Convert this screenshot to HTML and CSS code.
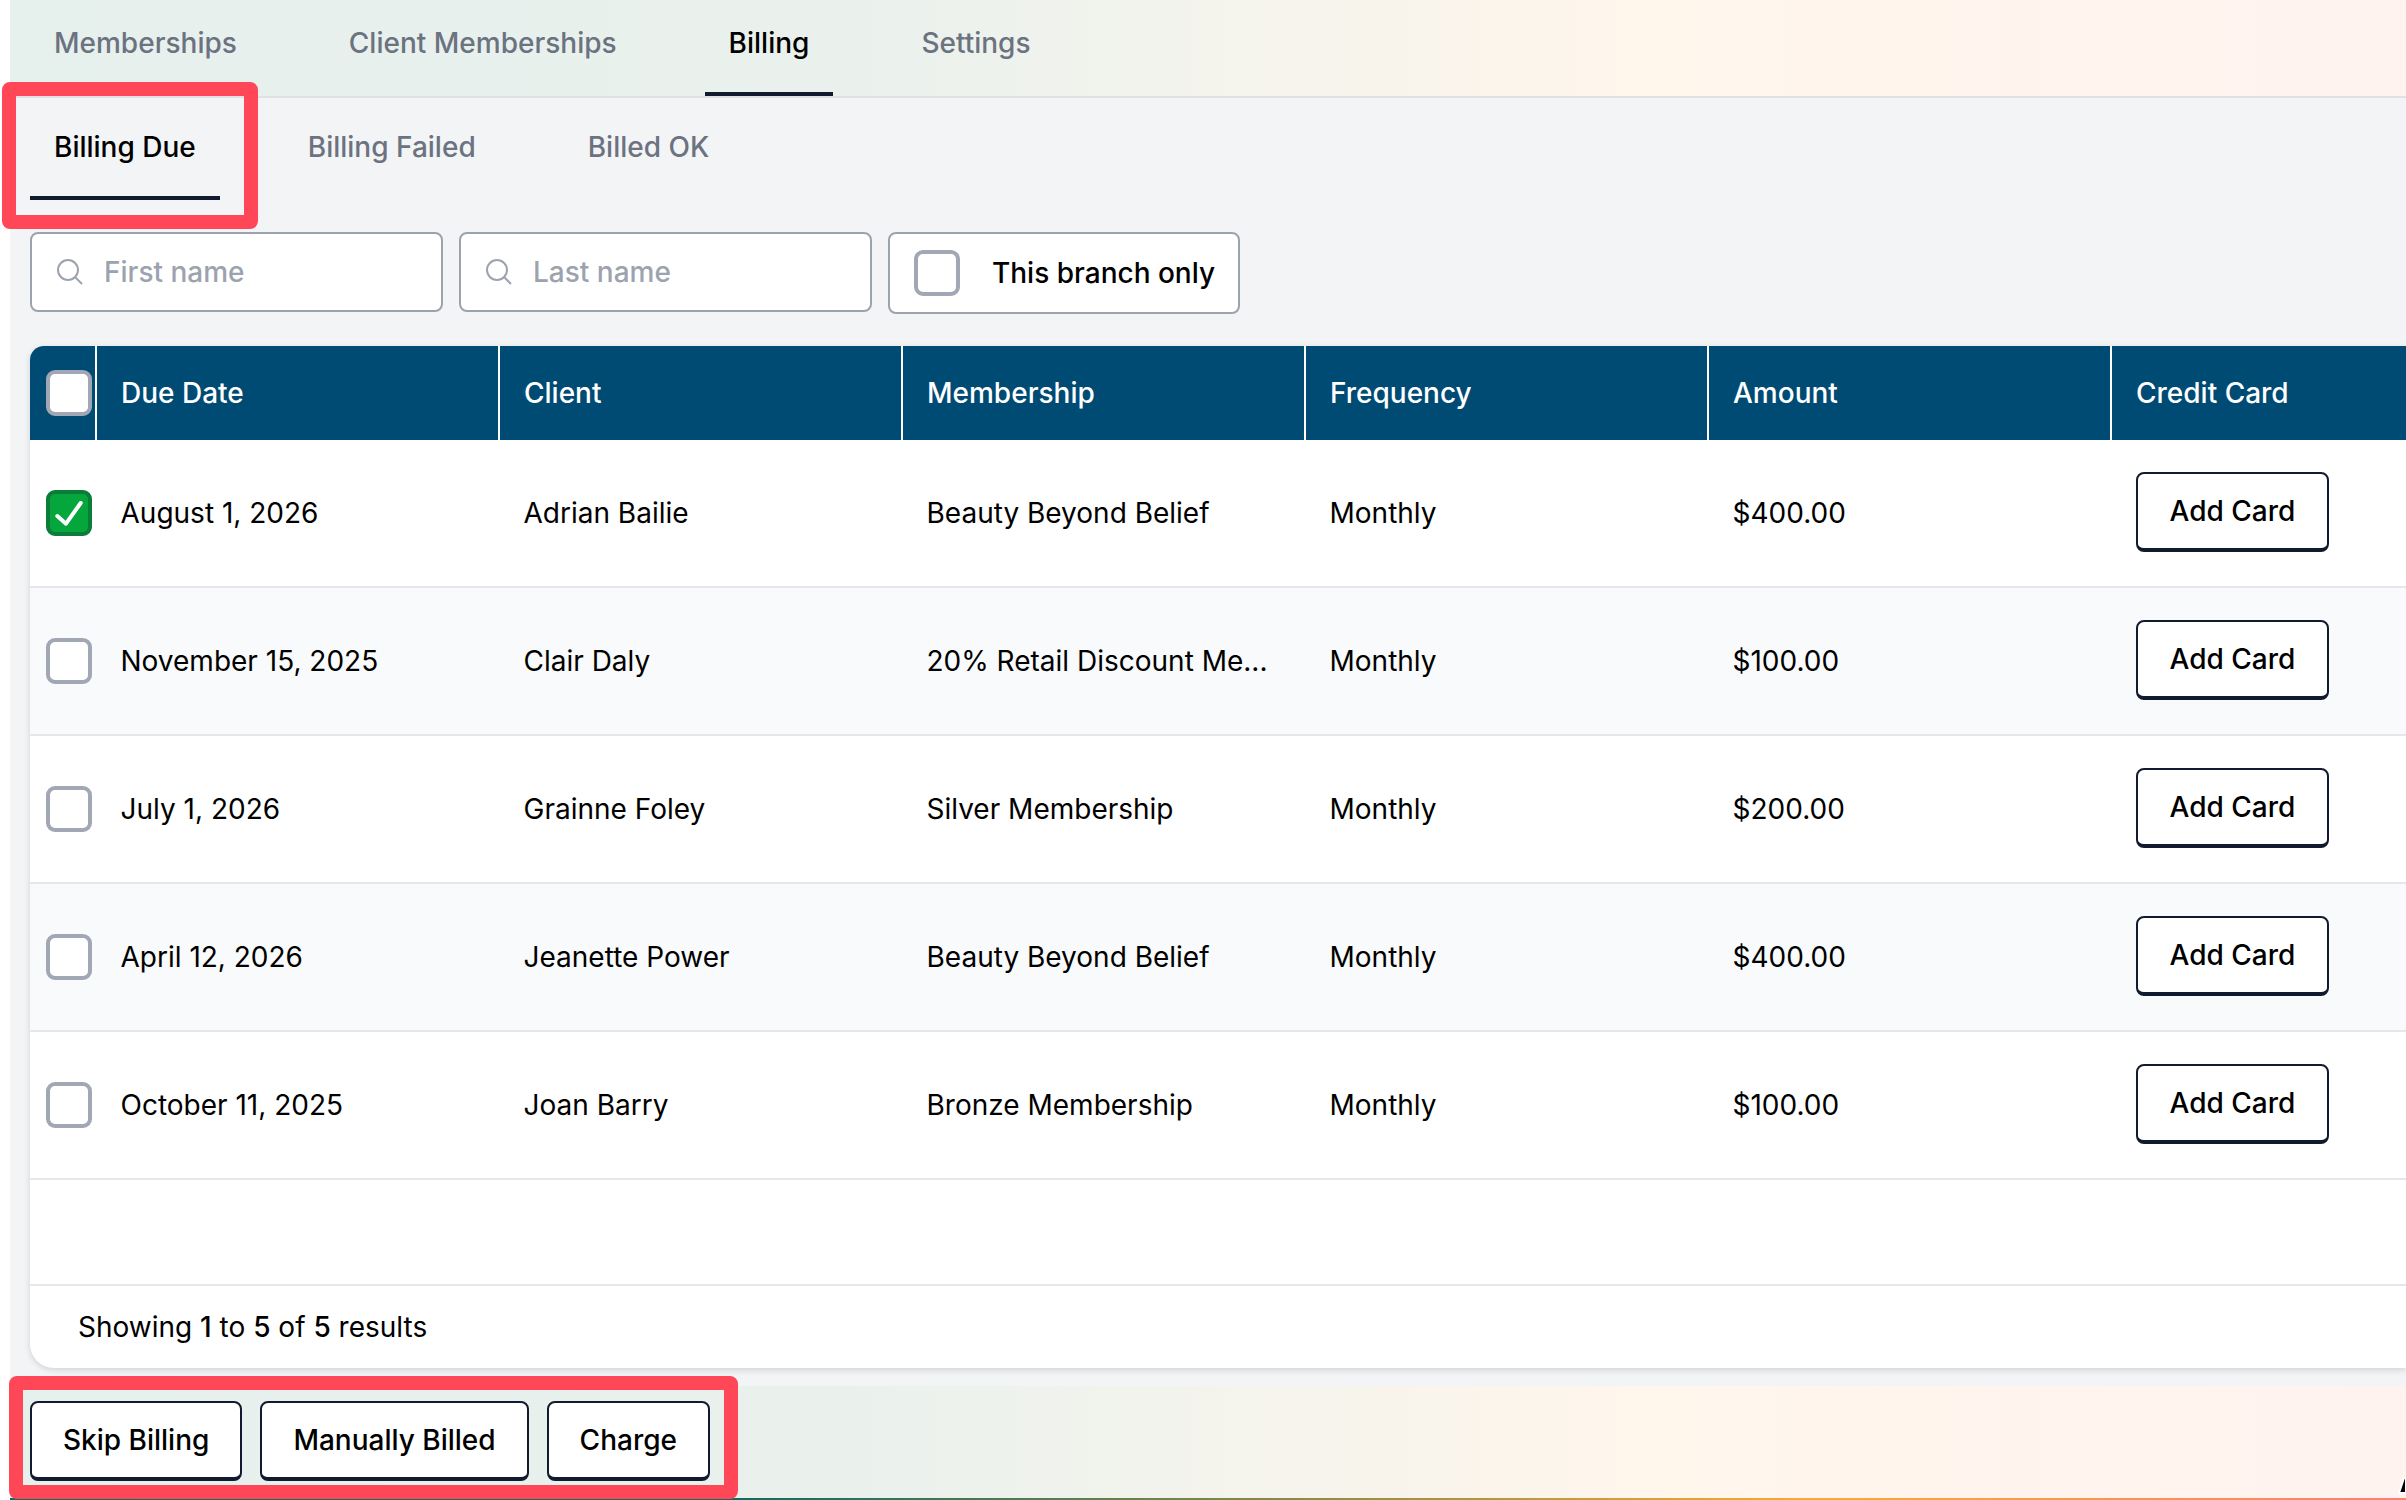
FILE: index.html
```html
<!DOCTYPE html>
<html lang="en">
<head>
    <meta charset="UTF-8">
    <meta name="viewport" content="width=device-width, initial-scale=1.0">
    <title>Billing</title>
    <link rel="stylesheet" href="styles.css">
</head>
<body>
<div class="page">
    <nav class="top-tabs">
        <a class="tab">Memberships</a>
        <a class="tab">Client Memberships</a>
        <a class="tab active">Billing</a>
        <a class="tab">Settings</a>
    </nav>

    <main class="content">
        <nav class="sub-tabs">
            <a class="tab active">Billing Due</a>
            <a class="tab">Billing Failed</a>
            <a class="tab">Billed OK</a>
            <span class="highlight highlight-tab"></span>
        </nav>

        <div class="filters">
            <label class="search">
                <svg viewBox="0 0 26 26" class="search-icon"><circle cx="11" cy="11" r="10"/><path d="M18.500 18.500L25 25"/></svg>
                <span>First name</span>
            </label>
            <label class="search">
                <svg viewBox="0 0 26 26" class="search-icon"><circle cx="11" cy="11" r="10"/><path d="M18.500 18.500L25 25"/></svg>
                <span>Last name</span>
            </label>
            <label class="branch">
                <span class="check"></span>
                <span>This branch only</span>
            </label>
        </div>

        <section class="card">
            <div class="row head">
                <div class="cell pick"><span class="check"></span></div>
                <div class="cell">Due Date</div>
                <div class="cell">Client</div>
                <div class="cell">Membership</div>
                <div class="cell">Frequency</div>
                <div class="cell">Amount</div>
                <div class="cell">Credit Card</div>
            </div>
            <div class="row">
                <div class="cell pick">
                    <span class="check checked"><svg viewBox="0 0 38 38"><path d="M7.300 22L16 29.700L30.700 9"/></svg></span>
                </div>
                <div class="cell">August 1, 2026</div>
                <div class="cell">Adrian Bailie</div>
                <div class="cell">Beauty Beyond Belief</div>
                <div class="cell">Monthly</div>
                <div class="cell">$400.00</div>
                <div class="cell"><button class="btn">Add Card</button></div>
            </div>
            <div class="row">
                <div class="cell pick"><span class="check"></span></div>
                <div class="cell">November 15, 2025</div>
                <div class="cell">Clair Daly</div>
                <div class="cell">20% Retail Discount Me...</div>
                <div class="cell">Monthly</div>
                <div class="cell">$100.00</div>
                <div class="cell"><button class="btn">Add Card</button></div>
            </div>
            <div class="row">
                <div class="cell pick"><span class="check"></span></div>
                <div class="cell">July 1, 2026</div>
                <div class="cell">Grainne Foley</div>
                <div class="cell">Silver Membership</div>
                <div class="cell">Monthly</div>
                <div class="cell">$200.00</div>
                <div class="cell"><button class="btn">Add Card</button></div>
            </div>
            <div class="row">
                <div class="cell pick"><span class="check"></span></div>
                <div class="cell">April 12, 2026</div>
                <div class="cell">Jeanette Power</div>
                <div class="cell">Beauty Beyond Belief</div>
                <div class="cell">Monthly</div>
                <div class="cell">$400.00</div>
                <div class="cell"><button class="btn">Add Card</button></div>
            </div>
            <div class="row">
                <div class="cell pick"><span class="check"></span></div>
                <div class="cell">October 11, 2025</div>
                <div class="cell">Joan Barry</div>
                <div class="cell">Bronze Membership</div>
                <div class="cell">Monthly</div>
                <div class="cell">$100.00</div>
                <div class="cell"><button class="btn">Add Card</button></div>
            </div>
            <div class="spacer"></div>
            <p class="results">Showing <b>1</b> to <b>5</b> of <b>5</b> results</p>
        </section>

        <footer class="actions">
            <button class="btn">Skip Billing</button>
            <button class="btn">Manually Billed</button>
            <button class="btn">Charge</button>
            <span class="highlight highlight-actions"></span>
            <svg class="cursor" viewBox="0 0 40 40"><path d="M38 18L33 33h7V18z"/></svg>
        </footer>
    </main>
</div>
</body>
</html>
```
FILE: styles.css
```css
* {
    box-sizing: border-box;
}
html, body {
    margin: 0;
    height: 100%;
    background: #fff;
    overflow: hidden;
}
body {
    font-family: Inter, "Noto Sans", sans-serif;
    font-size: 28px;
    color: #000;
}
.page {
    margin-left: 10px;
    height: 1500px;
    display: flex;
    flex-direction: column;
    background: #f3f4f6;
}
.top-tabs {
    display: flex;
    gap: 64px;
    height: 98px;
    padding-left: 20px;
    border-bottom: 2px solid #dfe1e3;
    background: linear-gradient(90deg, #e6f0ed 0%, #eaf1ed 35%, #fff6ec 68%, #fff3ef 100%);
}
.tab {
    display: flex;
    align-items: center;
    padding: 0 24px 6px;
    color: #6b7280;
    font-weight: 500;
    border-bottom: 4px solid transparent;
}
.tab.active {
    color: #000;
    border-bottom-color: #111a2e;
}
.sub-tabs {
    position: relative;
    display: flex;
    gap: 64px;
    height: 102px;
    padding-left: 20px;
}
.sub-tabs .tab {
    padding-bottom: 0;
}
.content {
    flex: 1;
    display: flex;
    flex-direction: column;
}
.highlight {
    position: absolute;
    border: 14px solid #ff4757;
    border-radius: 8px;
    pointer-events: none;
}
.highlight-tab {
    left: -8px;
    top: -16px;
    width: 256px;
    height: 147px;
}
.filters {
    display: flex;
    gap: 16px;
    margin: 32px 0 32px 20px;
}
.search, .branch {
    display: flex;
    align-items: center;
    background: #fff;
    border: 2px solid #9ca3af;
    border-radius: 8px;
    height: 80px;
}
.search {
    width: 413px;
    padding-left: 25px;
    gap: 21px;
    color: #9ca3af;
    font-weight: 500;
}
.search-icon {
    width: 26px;
    height: 26px;
    fill: none;
    stroke: #9ca3af;
    stroke-width: 2;
}
.branch {
    width: 352px;
    height: 82px;
    padding-left: 24px;
    gap: 32px;
    font-weight: 500;
}
.check {
    display: flex;
    width: 46px;
    height: 46px;
    flex: none;
    background: #fff;
    border: 4px solid #a1a7b5;
    border-radius: 9px;
}
.check.checked {
    background: #05a63c;
    border-color: #0a7d38;
}
.check svg {
    width: 100%;
    height: 100%;
    fill: none;
    stroke: #fff;
    stroke-width: 4;
    stroke-linecap: round;
    stroke-linejoin: round;
}
.card {
    margin-left: 20px;
    height: 1022px;
    display: flex;
    flex-direction: column;
    background: #fff;
    border-radius: 14px 0 0 24px;
    box-shadow: 0 2px 6px rgba(0, 0, 0, .14);
}
.row {
    display: grid;
    grid-template-columns: 67px repeat(5, 403px) 1fr;
    height: 148px;
    align-items: center;
    border-bottom: 2px solid #e5e7eb;
}
.row:nth-child(odd) {
    background: #f9fafb;
}
.cell {
    padding-left: 23.5px;
    white-space: nowrap;
}
.cell.pick {
    padding-left: 16px;
}
.row.head {
    height: 94px;
    border-bottom: 0;
    background: #004b73;
    color: #fff;
    font-weight: 500;
    border-radius: 14px 0 0 0;
}
.head .cell {
    height: 100%;
    display: flex;
    align-items: center;
    border-right: 2px solid #fff;
    padding-left: 24px;
}
.head .cell.pick {
    padding-left: 16px;
}
.head .cell:last-child {
    border-right: 0;
}
.btn {
    height: 80px;
    padding: 0 31px;
    font: 500 28px Inter, "Noto Sans", sans-serif;
    color: #000;
    background: #fff;
    border: 2px solid #111a2e;
    border-bottom-width: 4px;
    border-radius: 8px;
}
.cell .btn {
    margin-bottom: 2px;
    padding: 0 32px;
}
.spacer {
    flex: 1;
    border-bottom: 2px solid #e5e7eb;
}
.results {
    margin: 0;
    height: 82px;
    padding: 25px 0 0 48px;
    line-height: 32px;
}
.results b {
    font-weight: 500;
}
.actions {
    position: relative;
    flex: 1;
    display: flex;
    align-items: flex-start;
    gap: 18px;
    margin-top: 18px;
    padding: 15px 0 0 20px;
    border-bottom: 2px solid;
    border-image: linear-gradient(90deg, #0b6b5f 0%, #126a5e 30%, #f9ab30 75%, #ff7f72 100%) 1;
    background: linear-gradient(90deg, #e6f0ed 0%, #eaf1ed 35%, #fff6ec 68%, #fff3ef 100%);
}
.highlight-actions {
    left: -1px;
    top: -10px;
    width: 729px;
    height: 123px;
}
.cursor {
    position: absolute;
    right: 0;
    bottom: -2px;
    width: 40px;
    height: 40px;
    fill: #000;
    stroke: #fff;
    stroke-width: 2;
}
```
